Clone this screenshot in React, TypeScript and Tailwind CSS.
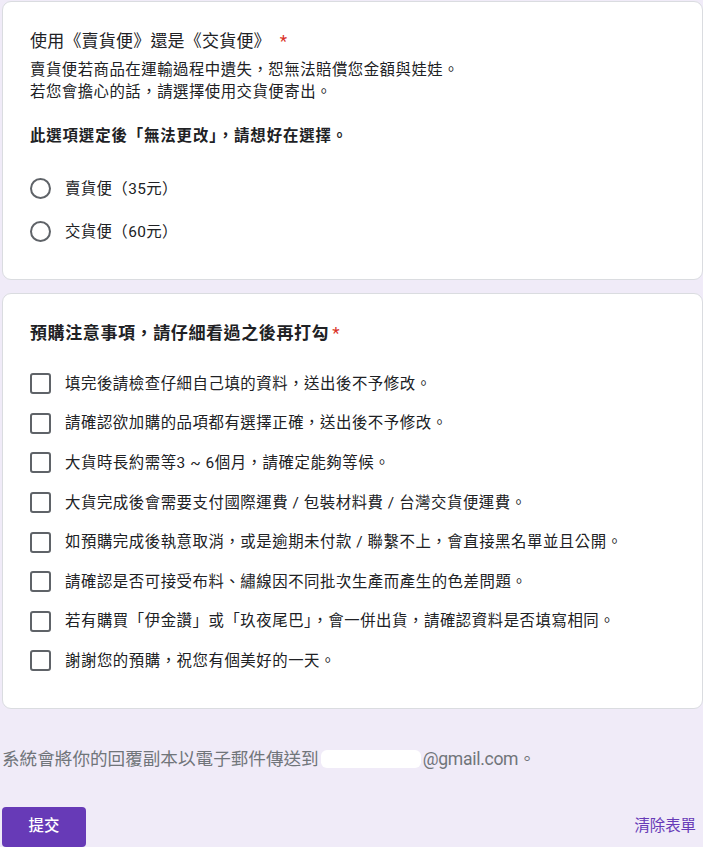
import React from 'react';

const font = "font-['Roboto','Noto_Sans_CJK_TC',sans-serif]";

const radioOptions = ['賣貨便（35元）', '交貨便（60元）'];

const notices = [
  '填完後請檢查仔細自己填的資料，送出後不予修改。',
  '請確認欲加購的品項都有選擇正確，送出後不予修改。',
  '大貨時長約需等3 ~ 6個月，請確定能夠等候。',
  '大貨完成後會需要支付國際運費 / 包裝材料費 / 台灣交貨便運費。',
  '如預購完成後執意取消，或是逾期未付款 / 聯繫不上，會直接黑名單並且公開。',
  '請確認是否可接受布料、繡線因不同批次生產而產生的色差問題。',
  '若有購買「伊金讚」或「玖夜尾巴」，會一併出貨，請確認資料是否填寫相同。',
  '謝謝您的預購，祝您有個美好的一天。',
];

const Card: React.FC<{ children: React.ReactNode; className?: string }> = ({ children, className }) => (
  <div className={`ml-[2px] rounded-[9px] border border-[#dadce0] bg-white pl-[27px] pr-4 ${className ?? ''}`}>
    {children}
  </div>
);

const Required: React.FC<{ className?: string }> = ({ className }) => (
  <span className={`text-[#d93025] ${className ?? 'ml-[9px]'}`}>*</span>
);

export default function App() {
  return (
    <div className={`min-h-[847px] w-[703px] overflow-hidden bg-[#f0ebf8] pt-px text-[#202124] ${font}`}>
      <Card className="pt-[27px] pb-[26px]">
        <div className="text-[17px] leading-[24px] tracking-[0.2px]">
          使用《賣貨便》還是《交貨便》
          <Required />
        </div>
        <div className="mt-[6px] text-[15.4px] leading-[22px] tracking-[0.5px]">
          <div>賣貨便若商品在運輸過程中遺失，恕無法賠償您金額與娃娃。</div>
          <div>若您會擔心的話，請選擇使用交貨便寄出。</div>
          <div>&nbsp;</div>
          <div className="font-bold tracking-[0.9px]">此選項選定後「無法更改」，請想好在選擇。</div>
        </div>
        <div className="mt-[20px]">
          {radioOptions.map((label) => (
            <div key={label} className="flex h-[43px] items-center">
              <span className="h-[21px] w-[21px] shrink-0 rounded-full border-[2.5px] border-[#5f6368]" />
              <span className="ml-[14px] text-[15.4px] leading-[22px] tracking-[0.4px]">{label}</span>
            </div>
          ))}
        </div>
      </Card>

      <Card className="mt-[13px] pt-[27px] pb-[27px]">
        <div className="text-[17px] font-bold leading-[24px] tracking-[0.6px]">
          預購注意事項，請仔細看過之後再打勾
          <Required className="ml-[3px] font-normal" />
        </div>
        <div className="mt-[19px]">
          {notices.map((text) => (
            <div key={text} className="flex h-[39.6px] items-center">
              <span className="h-[21px] w-[21px] shrink-0 rounded-[3px] border-[2.5px] border-[#5f6368]" />
              <span className="ml-[14px] text-[15.4px] leading-[22px] tracking-[0.55px]">{text}</span>
            </div>
          ))}
        </div>
      </Card>

      <div className="mt-[38px] ml-[2px] flex items-center text-[17.6px] leading-[24px] text-[#70757a]">
        <span>系統會將你的回覆副本以電子郵件傳送到</span>
        <span className="mx-[2px] inline-block h-[18px] w-[100px] rounded-[6px] bg-white" />
        <span className="tracking-[-0.3px]">@gmail.com。</span>
      </div>

      <div className="mt-[36px] ml-[2px] flex items-center justify-between pr-[7px]">
        <button
          type="button"
          className="flex h-[40px] w-[84px] items-center justify-center rounded-[4px] bg-[#673ab7] text-[15.4px] font-medium text-white"
        >
          提交
        </button>
        <button type="button" className="text-[15.4px] text-[#673ab7]">
          清除表單
        </button>
      </div>
    </div>
  );
}
